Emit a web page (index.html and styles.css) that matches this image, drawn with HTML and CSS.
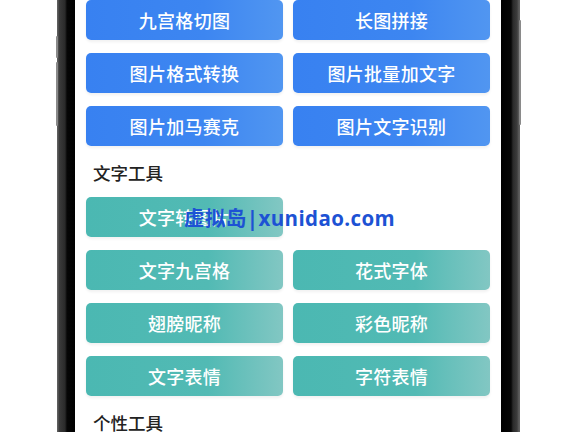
FILE: index.html
```html
<!DOCTYPE html>
<html lang="zh">
<head>
<meta charset="utf-8">
<link rel="stylesheet" href="styles.css">
</head>
<body>
<div class="stage">
  <div class="side side-left"></div>
  <div class="frame frame-left"><span class="key key-l1"></span><span class="key key-l2"></span></div>
  <div class="screen">
    <div class="grid">
      <div class="btn blue">九宫格切图</div>
      <div class="btn blue">长图拼接</div>
      <div class="btn blue">图片格式转换</div>
      <div class="btn blue">图片批量加文字</div>
      <div class="btn blue">图片加马赛克</div>
      <div class="btn blue">图片文字识别</div>
    </div>
    <div class="heading">文字工具</div>
    <div class="grid">
      <div class="btn teal">文字转图片</div>
      <div class="empty"></div>
      <div class="btn teal">文字九宫格</div>
      <div class="btn teal">花式字体</div>
      <div class="btn teal">翅膀昵称</div>
      <div class="btn teal">彩色昵称</div>
      <div class="btn teal">文字表情</div>
      <div class="btn teal">字符表情</div>
    </div>
    <div class="heading">个性工具</div>
    <div class="watermark">虚拟岛|xunidao.com</div>
  </div>
  <div class="frame frame-right"><span class="key key-r1"></span></div>
  <div class="side"></div>
</div>
</body>
</html>
```

FILE: styles.css
```css
html, body {
  margin: 0;
  padding: 0;
  background: #ffffff;
}
body {
  width: 576px;
  height: 432px;
  overflow: hidden;
  font-family: "Noto Sans CJK SC", "Noto Sans", sans-serif;
}
.stage {
  display: flex;
  height: 432px;
}
.side {
  flex: 1;
  background: #ffffff;
}
.side-left {
  flex: 0 0 57px;
}
.frame {
  position: relative;
  height: 432px;
}
.frame-left {
  flex: 0 0 18px;
  background: linear-gradient(to right, #5e5e5e 0, #5e5e5e 1px, #3c3c3c 2px, #2a2a2a 8px, #060606 10px, #000 18px);
}
.frame-right {
  flex: 0 0 19px;
  background: linear-gradient(to right, #000 0, #060606 10px, #2a2a2a 12px, #3c3c3c 16px, #5e5e5e 18px, #5e5e5e 19px);
}
.key {
  position: absolute;
  width: 2px;
  background: #8a8a8a;
  border-radius: 1px;
}
.key-l1 { left: -1px; top: 36px; height: 22px; }
.key-l2 { left: -1px; top: 62px; height: 64px; }
.key-r1 { right: -1px; top: 20px; height: 105px; }
.screen {
  position: relative;
  flex: 0 0 426px;
  box-sizing: border-box;
  padding: 0 11px;
  background: #ffffff;
}
.grid {
  display: grid;
  grid-template-columns: 197px 197px;
  column-gap: 10px;
  row-gap: 13px;
  grid-auto-rows: 40px;
}
.btn {
  display: flex;
  align-items: center;
  justify-content: center;
  border-radius: 5px;
  color: #ffffff;
  font-size: 18px;
  font-weight: 500;
  letter-spacing: 0.3px;
  box-shadow: 0 2px 3px rgba(0, 0, 0, 0.06);
}
.blue {
  background: linear-gradient(to right, #3881f1 0%, #3d86f1 60%, #5196f1 100%);
}
.teal {
  background: linear-gradient(to right, #4bb8b2 0%, #52bab4 62%, #82c7c3 100%);
}
.heading {
  margin: 15px 0 12px 7px;
  font-size: 17.5px;
  line-height: 24px;
  font-weight: 500;
  color: #222222;
}
.watermark {
  position: absolute;
  left: 109px;
  top: 205px;
  font-family: "Open Sans", "Noto Sans CJK SC", sans-serif;
  font-size: 20.5px;
  font-weight: 700;
  line-height: 26px;
  letter-spacing: 0.4px;
  color: #1d52d4;
  white-space: nowrap;
}
```
